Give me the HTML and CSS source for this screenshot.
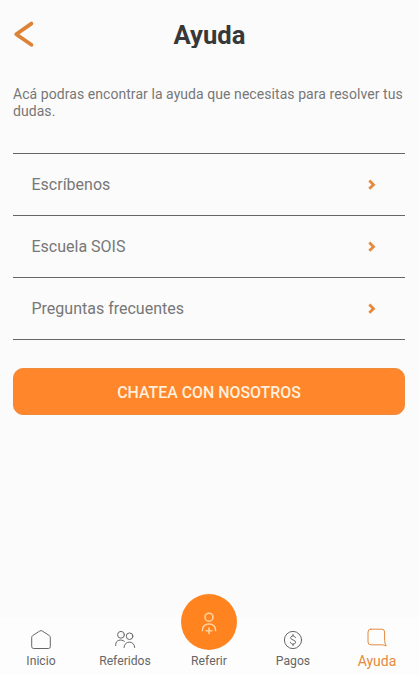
FILE: index.html
```html
<!DOCTYPE html>
<html lang="es">
<head>
    <meta charset="UTF-8">
    <meta name="viewport" content="width=device-width, initial-scale=1.0">
    <title>Ayuda</title>
    <link rel="stylesheet" href="styles.css">
</head>
<body>
    <header class="header">
        <a href="#" class="back" aria-label="Volver">
            <svg width="24" height="28" viewBox="0 0 24 28"><path d="M18.4 3.6 L3.2 14.2 L18.4 24.8"/></svg>
        </a>
        <h1>Ayuda</h1>
    </header>

    <main>
        <p class="intro">Acá podras encontrar la ayuda que necesitas para resolver tus dudas.</p>

        <ul class="options">
            <li>
                <span>Escríbenos</span>
                <svg width="8" height="12" viewBox="0 0 8 12"><path d="M1.3 1.6 L5.5 5.7 L1.3 9.8"/></svg>
            </li>
            <li>
                <span>Escuela SOIS</span>
                <svg width="8" height="12" viewBox="0 0 8 12"><path d="M1.3 1.6 L5.5 5.7 L1.3 9.8"/></svg>
            </li>
            <li>
                <span>Preguntas frecuentes</span>
                <svg width="8" height="12" viewBox="0 0 8 12"><path d="M1.3 1.6 L5.5 5.7 L1.3 9.8"/></svg>
            </li>
        </ul>

        <button class="chat">CHATEA CON NOSOTROS</button>
    </main>

    <nav class="tabs">
        <a href="#" class="tab">
            <svg width="24" height="24" viewBox="0 0 24 24"><path d="M2.7 9.2 Q2.7 8.2 3.6 7.6 L10.6 3.1 Q12 2.2 13.4 3.1 L20.4 7.6 Q21.3 8.2 21.3 9.2 V18.7 Q21.3 20.5 19.5 20.5 H4.5 Q2.7 20.5 2.7 18.7 Z"/></svg>
            <span>Inicio</span>
        </a>
        <a href="#" class="tab">
            <svg width="24" height="24" viewBox="0 0 24 24"><circle cx="8" cy="6.8" r="3.4"/><circle cx="16.6" cy="8.2" r="3.3"/><path d="M2.7 17.6 V16.7 C2.7 11.8 8.2 10.8 11.4 13.3"/><path d="M11 19.5 C11 12.2 21.7 12.2 21.7 19.5"/></svg>
            <span>Referidos</span>
        </a>
        <a href="#" class="tab">
            <i class="bubble">
                <svg width="24" height="24" viewBox="0 0 24 24"><circle cx="12" cy="7.2" r="4"/><path d="M5.4 20.6 C4.6 11.8 19.4 11.8 18.6 20.6"/><path d="M12 18 V23.6 M9.2 20.8 H14.8"/></svg>
            </i>
            <span>Referir</span>
        </a>
        <a href="#" class="tab">
            <svg width="24" height="24" viewBox="0 0 24 24"><circle cx="12" cy="12" r="8.6"/><path class="dollar" d="M14.5 9.7 C14.2 7.2 9.6 7.3 9.6 9.8 C9.6 12.4 14.6 11.5 14.6 14.2 C14.6 16.8 9.6 16.9 9.4 14.2 M12 6.3 V7.9 M12 16.1 V17.7"/></svg>
            <span>Pagos</span>
        </a>
        <a href="#" class="tab active">
            <svg width="24" height="24" viewBox="0 0 24 24"><path d="M5.8 2.2 H16.8 Q19.6 2.2 19.6 5 V13.5 Q19.6 15.8 21.2 19 Q19 17.8 16.5 17.8 H5.8 Q3 17.8 3 15 V5 Q3 2.2 5.8 2.2 Z"/></svg>
            <span>Ayuda</span>
        </a>
    </nav>
</body>
</html>
```
FILE: styles.css
```css
* {
    box-sizing: border-box;
}

body {
    font-family: Roboto, "Liberation Sans", sans-serif;
    margin: 0;
    height: 675px;
    display: flex;
    flex-direction: column;
    background-color: #fbfbfb;
    color: #777;
    overflow: hidden;
}

svg {
    display: block;
    fill: none;
    stroke: currentColor;
    stroke-linecap: round;
    stroke-linejoin: round;
}

.header {
    display: grid;
    grid-template-columns: 24px 1fr 24px;
    align-items: start;
    padding: 20px 13px 0 13px;
    height: 86px;
}

.back {
    color: #dd8337;
    stroke-width: 3.8;
}

h1 {
    margin: 0;
    height: 28px;
    overflow: hidden;
    text-align: center;
    font-size: 25.6px;
    line-height: 31px;
    color: #383838;
}

main {
    flex: 1;
    padding: 0 14px 0 13px;
}

.intro {
    margin: 0;
    height: 67px;
    font-size: 14px;
    line-height: 16.5px;
    letter-spacing: 0.06px;
}

.options {
    margin: 0;
    padding: 0;
    list-style: none;
    border-top: 1px solid #666;
}

.options li {
    display: flex;
    align-items: center;
    justify-content: space-between;
    height: 62px;
    padding: 0 29px 0 18.5px;
    border-bottom: 1px solid #666;
    font-size: 16px;
}

.options svg {
    color: #e58a3c;
    stroke-width: 2.8;
    stroke-linecap: butt;
    stroke-linejoin: miter;
}

.chat {
    display: block;
    width: 100%;
    height: 47px;
    margin-top: 28px;
    padding: 1px 0 0;
    border: 1px solid #ee8a3c;
    border-radius: 10px;
    background-color: #ff862a;
    color: #fff0dc;
    font-family: inherit;
    font-size: 15.9px;
    font-weight: 500;
}

.tabs {
    display: grid;
    grid-template-columns: repeat(5, 84px);
    height: 58px;
    margin-left: -1px;
    background-color: #fdfdfd;
}

.tab {
    position: relative;
    display: flex;
    flex-direction: column;
    align-items: center;
    justify-content: flex-end;
    padding-bottom: 6px;
    font-size: 12.2px;
    line-height: 16px;
    color: #666;
    text-decoration: none;
}

.tab svg {
    margin-bottom: 1px;
}

.tab.active {
    font-size: 14px;
    color: #e58a3c;
}

.tab.active svg {
    margin-bottom: 2px;
}

/* raised button over the tab bar */
.bubble {
    position: absolute;
    top: -23px;
    left: 14px;
    width: 56px;
    height: 56px;
    display: flex;
    align-items: center;
    justify-content: center;
    border-radius: 50%;
    background-color: #ff841f;
    color: #ffd3a0;
}

.bubble svg {
    margin: 0;
    stroke-width: 1.6;
}
```
